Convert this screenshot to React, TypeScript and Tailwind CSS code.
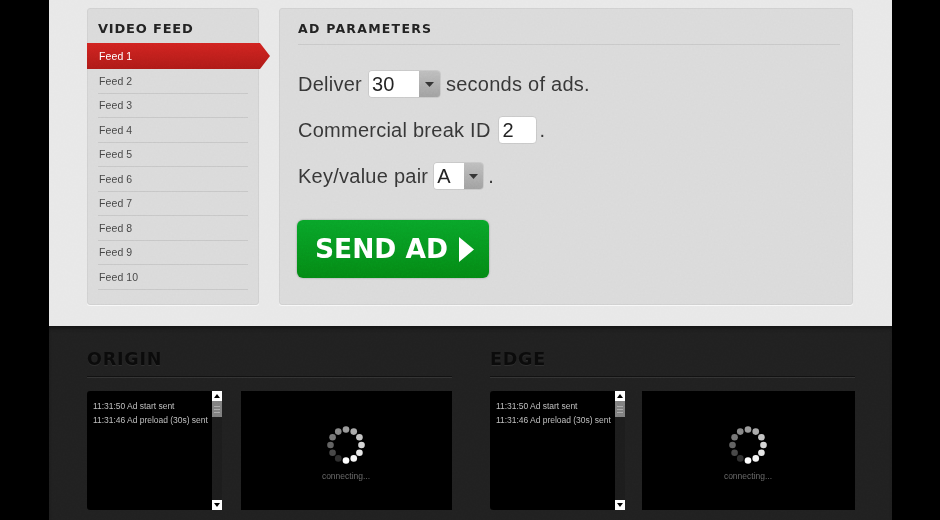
const FEEDS = ["Feed 1", "Feed 2", "Feed 3", "Feed 4", "Feed 5", "Feed 6", "Feed 7", "Feed 8", "Feed 9", "Feed 10"];
const LOG = ["11:31:50 Ad start sent", "11:31:46 Ad preload (30s) sent"];
// dot brightness, clockwise from the top of the spinner
const DOTS = [0.6, 0.66, 0.76, 0.84, 0.9, 0.96, 1, 0.18, 0.28, 0.38, 0.46, 0.52];

function Sidebar() {
  return (
    <div className="w-[172px] h-[297px] rounded-[3px] border border-[#d0d0d0] bg-[#dadada] shadow-[0_1px_0_#f8f8f8]">
      <h2 className="h-[34px] pl-[10px] pt-[11px] font-['DejaVu_Sans'] text-[13px] leading-[18px] font-bold tracking-[0.8px] text-[#222]">VIDEO FEED</h2>
      <ul className="font-['Liberation_Sans'] text-[10.5px] tracking-[0.1px]">
        {FEEDS.map((f, i) =>
          i === 0 ? (
            <li key={f} className="-ml-px -mr-[12px] h-[26px] pl-[12px] pt-px flex items-center bg-gradient-to-b from-[#d12320] to-[#ad1a17] text-white [clip-path:polygon(0_0,173px_0,100%_50%,173px_100%,0_100%)]">
              {f}
            </li>
          ) : (
            <li key={f} className="mx-[10px] h-[24.5px] pl-px pt-[2px] flex items-center border-b border-[#c6c6c6] text-[#444]">
              {f}
            </li>
          ),
        )}
      </ul>
    </div>
  );
}

function Select({ value, width, valueWidth, margin }: { value: string; width: string; valueWidth: string; margin: string }) {
  return (
    <span className={`${width} ${margin} h-[28px] flex rounded-[4px] border border-[#c8c8c8] overflow-hidden`}>
      <span className={`${valueWidth} pl-[3px] bg-white flex items-center text-[#222]`}>{value}</span>
      <span className="flex-1 flex items-center justify-center bg-gradient-to-b from-[#bdbdbd] to-[#a0a0a0]">
        <svg width="9" height="5" viewBox="0 0 9 5">
          <path d="M0 0h9L4.5 5z" fill="#333" />
        </svg>
      </span>
    </span>
  );
}

function AdParameters() {
  return (
    <div className="w-[574px] h-[297px] px-[18px] rounded-[3px] border border-[#d0d0d0] bg-[#dadada] shadow-[0_1px_0_#f8f8f8]">
      <h2 className="h-[36px] pt-[11px] mr-[-6px] border-b border-[#c8c8c8] font-['DejaVu_Sans'] text-[12.5px] leading-[18px] font-bold tracking-[1.25px] text-[#222]">AD PARAMETERS</h2>
      <div className="pt-[25px] font-['Liberation_Sans'] text-[20px] tracking-[0.25px] text-[#363636] flex flex-col gap-[18px]">
        <div className="flex items-center h-[28px]">
          Deliver
          <Select value="30" width="w-[73px]" valueWidth="w-[50px]" margin="mx-[6px]" />
          <span className="-ml-px">seconds of ads.</span>
        </div>
        <div className="flex items-center h-[28px]">
          Commercial break ID
          <span className="w-[39px] h-[28px] ml-[7px] mr-[3px] pl-[4px] flex items-center rounded-[4px] border border-[#c8c8c8] bg-white text-[#222]">2</span>
          .
        </div>
        <div className="flex items-center h-[28px]">
          Key/value pair
          <Select value="A" width="w-[51px]" valueWidth="w-[30px]" margin="ml-[5px] mr-[4px]" />
          <span>.</span>
        </div>
      </div>
      <button className="mt-[30px] -ml-px w-[192px] h-[58px] flex items-center pl-[18px] gap-[11px] rounded-[6px] bg-gradient-to-b from-[#08a529] to-[#048813] shadow-[0_0_2px_#8a8a8a] font-['DejaVu_Sans'] text-[26.5px] font-bold text-white">
        SEND AD
        <svg width="15" height="25" viewBox="0 0 15 25">
          <path d="M0 0l15 12.5L0 25z" fill="#fff" />
        </svg>
      </button>
    </div>
  );
}

function Spinner() {
  return (
    <svg width="40" height="40" viewBox="-20 -20 40 40">
      {DOTS.map((o, i) => {
        const a = (i * Math.PI) / 6;
        return <circle key={i} cx={15.5 * Math.sin(a)} cy={-15.5 * Math.cos(a)} r="3.3" fill="#fff" opacity={o} />;
      })}
    </svg>
  );
}

function Scrollbar() {
  return (
    <div className="w-[10px] flex flex-col bg-[#1c1c1c]">
      <div className="h-[10px] bg-white flex items-center justify-center">
        <svg width="6" height="4" viewBox="0 0 6 4"><path d="M3 0l3 4H0z" fill="#000" /></svg>
      </div>
      <div className="h-[16px] bg-[#7e7e7e] flex flex-col items-center justify-center gap-[2px]">
        <div className="w-[6px] h-px bg-[#aaa]" />
        <div className="w-[6px] h-px bg-[#aaa]" />
        <div className="w-[6px] h-px bg-[#aaa]" />
      </div>
      <div className="flex-1" />
      <div className="h-[10px] bg-white flex items-center justify-center">
        <svg width="6" height="4" viewBox="0 0 6 4"><path d="M0 0h6L3 4z" fill="#000" /></svg>
      </div>
    </div>
  );
}

function Monitor({ title, gap }: { title: string; gap: string }) {
  return (
    <div className="w-[365px]">
      <h2 className="h-[51px] pt-[22px] border-b border-[#111] shadow-[0_1px_0_#333] font-['DejaVu_Sans'] text-[17.5px] leading-[22px] font-bold tracking-[0.8px] text-[#0a0a0a] [text-shadow:0_1px_0_#2e2e2e]">{title}</h2>
      <div className={`mt-[14px] flex ${gap} h-[119px] font-['Liberation_Sans']`}>
        <div className="w-[135px] flex rounded-l-[3px] overflow-hidden">
          <div className="flex-1 bg-black pl-[6px] pt-[8px] text-[8.5px] leading-[14px] tracking-[-0.03px] text-[#bbb] whitespace-nowrap">
            {LOG.map((l) => (
              <div key={l}>{l}</div>
            ))}
          </div>
          <Scrollbar />
        </div>
        <div className="flex-1 bg-black flex flex-col items-center pt-[34px] pr-px">
          <Spinner />
          <div className="mt-[6px] text-[8.5px] leading-[10px] text-[#666]">connecting...</div>
        </div>
      </div>
    </div>
  );
}

export default function App() {
  return (
    <div className="h-[520px] w-[940px] overflow-hidden bg-black">
      <div className="relative ml-[49px] w-[843px]">
        <div className="h-[326px] pl-[38px] pt-[8px] flex gap-[20px] bg-[#e8e8e8]">
          <Sidebar />
          <AdParameters />
        </div>
        <div className="h-[194px] pl-[38px] flex gap-[38px] bg-[#202020] shadow-[inset_0_4px_4px_-2px_#111]">
          <Monitor title="ORIGIN" gap="gap-[19px]" />
          <Monitor title="EDGE" gap="gap-[17px]" />
        </div>
        {/* paper grain over the whole column */}
        <svg className="absolute inset-0 pointer-events-none mix-blend-overlay opacity-15" width="843" height="520">
          <filter id="grain">
            <feTurbulence type="fractalNoise" baseFrequency="0.55" numOctaves="2" seed="4" />
            <feColorMatrix type="saturate" values="0" />
          </filter>
          <rect width="843" height="520" filter="url(#grain)" />
        </svg>
      </div>
    </div>
  );
}
